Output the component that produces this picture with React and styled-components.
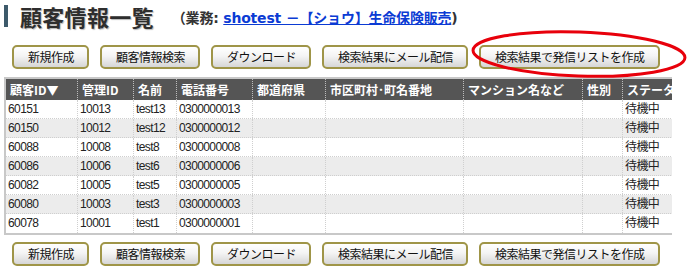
import React from "react";
import styled, { createGlobalStyle } from "styled-components";

const Global = createGlobalStyle`
  html, body { margin: 0; padding: 0; background: #fff; }
  body { font-family: "Noto Sans CJK JP", "Liberation Sans", sans-serif; color: #222; }
`;

const Page = styled.div`
  position: relative;
  width: 688px;
  height: 275px;
  padding: 5px 0 0 4px;
  box-sizing: border-box;
  overflow: hidden;
`;

const TitleRow = styled.div`
  display: flex;
  align-items: center;
  height: 22px;
  border-left: 4px solid #3d5a6b;
  padding-left: 12px;
`;

const Title = styled.h1`
  margin: 0;
  font-family: "Noto Sans CJK JP", sans-serif;
  font-size: 22px;
  line-height: 22px;
  font-weight: 700;
  color: #2e2e2e;
  text-shadow: 1px 1px 1px #b8b8b8;
  letter-spacing: 0.3px;
`;

const Sub = styled.span`
  margin-left: 18px;
  margin-top: 2px;
  font-family: "DejaVu Sans", "Noto Sans CJK JP", sans-serif;
  font-size: 14px;
  font-weight: 700;
  color: #333;
  letter-spacing: -0.2px;
`;

const Link = styled.a`
  color: #0b3bd4;
  text-decoration: underline;
  cursor: pointer;
`;

const ButtonRow = styled.div`
  display: flex;
  gap: 11px;
  padding-left: 8px;
  margin-top: ${(p) => p.$top}px;
`;

const Btn = styled.button`
  height: 24px;
  box-sizing: border-box;
  padding: 0 13px 0 14px;
  border: 2px solid #9f9548;
  border-radius: 5px;
  background: linear-gradient(#ffffff 0%, #f4f4f4 45%, #d6d6d6 100%);
  font-family: "Noto Sans CJK JP", sans-serif;
  font-size: 12px;
  letter-spacing: -0.5px;
  color: #111;
  line-height: 20px;
  cursor: pointer;
  white-space: nowrap;
`;

const TableWrap = styled.div`
  margin-top: 8px;
  width: 668px;
  box-sizing: border-box;
  border-top: 2px solid #c8c8c8;
  border-left: 2px solid #c8c8c8;
  border-bottom: 2px solid #c8c8c8;
  overflow: hidden;
`;

const cols = "72px 56px 43px 76px 73px 138px 119px 40px 90px";

const HeadRow = styled.div`
  display: grid;
  grid-template-columns: ${cols};
  height: 21px;
  background: #555;
  width: max-content;
`;

const HeadCell = styled.div`
  box-sizing: border-box;
  border-right: 1px dotted #bdbdbd;
  padding-left: 4px;
  font-family: "Noto Sans CJK JP", sans-serif;
  font-size: 12px;
  font-weight: 700;
  color: #fff;
  line-height: 21px;
  white-space: nowrap;
  overflow: hidden;
`;

const Row = styled.div`
  display: grid;
  grid-template-columns: ${cols};
  height: 19px;
  box-sizing: border-box;
  border-bottom: ${(p) => (p.$last ? "none" : "1px dotted #cfcfcf")};
  background: ${(p) => (p.$alt ? "#ececec" : "#fff")};
  width: max-content;
`;

const Cell = styled.div`
  box-sizing: border-box;
  border-right: 1px dotted #cfcfcf;
  padding-left: 2px;
  font-family: "Liberation Sans", "Noto Sans CJK JP", sans-serif;
  font-size: 12px;
  letter-spacing: -0.6px;
  color: #222;
  line-height: 18px;
  white-space: nowrap;
  overflow: hidden;
`;

const Mark = styled.svg`
  position: absolute;
  left: 468px;
  top: 27px;
  pointer-events: none;
`;

const headers = [
  "顧客ID▼",
  "管理ID",
  "名前",
  "電話番号",
  "都道府県",
  "市区町村･町名番地",
  "マンション名など",
  "性別",
  "ステータス",
];

const rows = [
  ["60151", "10013", "test13", "0300000013"],
  ["60150", "10012", "test12", "0300000012"],
  ["60088", "10008", "test8", "0300000008"],
  ["60086", "10006", "test6", "0300000006"],
  ["60082", "10005", "test5", "0300000005"],
  ["60080", "10003", "test3", "0300000003"],
  ["60078", "10001", "test1", "0300000001"],
];

const buttons = [
  "新規作成",
  "顧客情報検索",
  "ダウンロード",
  "検索結果にメール配信",
  "検索結果で発信リストを作成",
];

function Buttons({ top }) {
  return (
    <ButtonRow $top={top}>
      {buttons.map((b) => (
        <Btn key={b}>{b}</Btn>
      ))}
    </ButtonRow>
  );
}

export default function App() {
  return (
    <>
      <Global />
      <Page>
        <TitleRow>
          <Title>顧客情報一覧</Title>
          <Sub>
            （業務: <Link>shotest －【ショウ】生命保険販売</Link>)
          </Sub>
        </TitleRow>
        <Buttons top={18} />
        <TableWrap>
          <HeadRow>
            {headers.map((h) => (
              <HeadCell key={h}>{h}</HeadCell>
            ))}
          </HeadRow>
          {rows.map((r, i) => (
            <Row key={r[0]} $alt={i % 2 === 1} $last={i === rows.length - 1}>
              {r.map((c, j) => (
                <Cell key={j}>{c}</Cell>
              ))}
              <Cell />
              <Cell />
              <Cell />
              <Cell />
              <Cell>待機中</Cell>
            </Row>
          ))}
        </TableWrap>
        <Buttons top={7} />
        <Mark width="220" height="56" viewBox="0 0 220 56">
          <ellipse
            cx="111"
            cy="27"
            rx="106"
            ry="22"
            fill="none"
            stroke="#e8000b"
            strokeWidth="3"
            transform="rotate(2 111 27)"
          />
        </Mark>
      </Page>
    </>
  );
}
